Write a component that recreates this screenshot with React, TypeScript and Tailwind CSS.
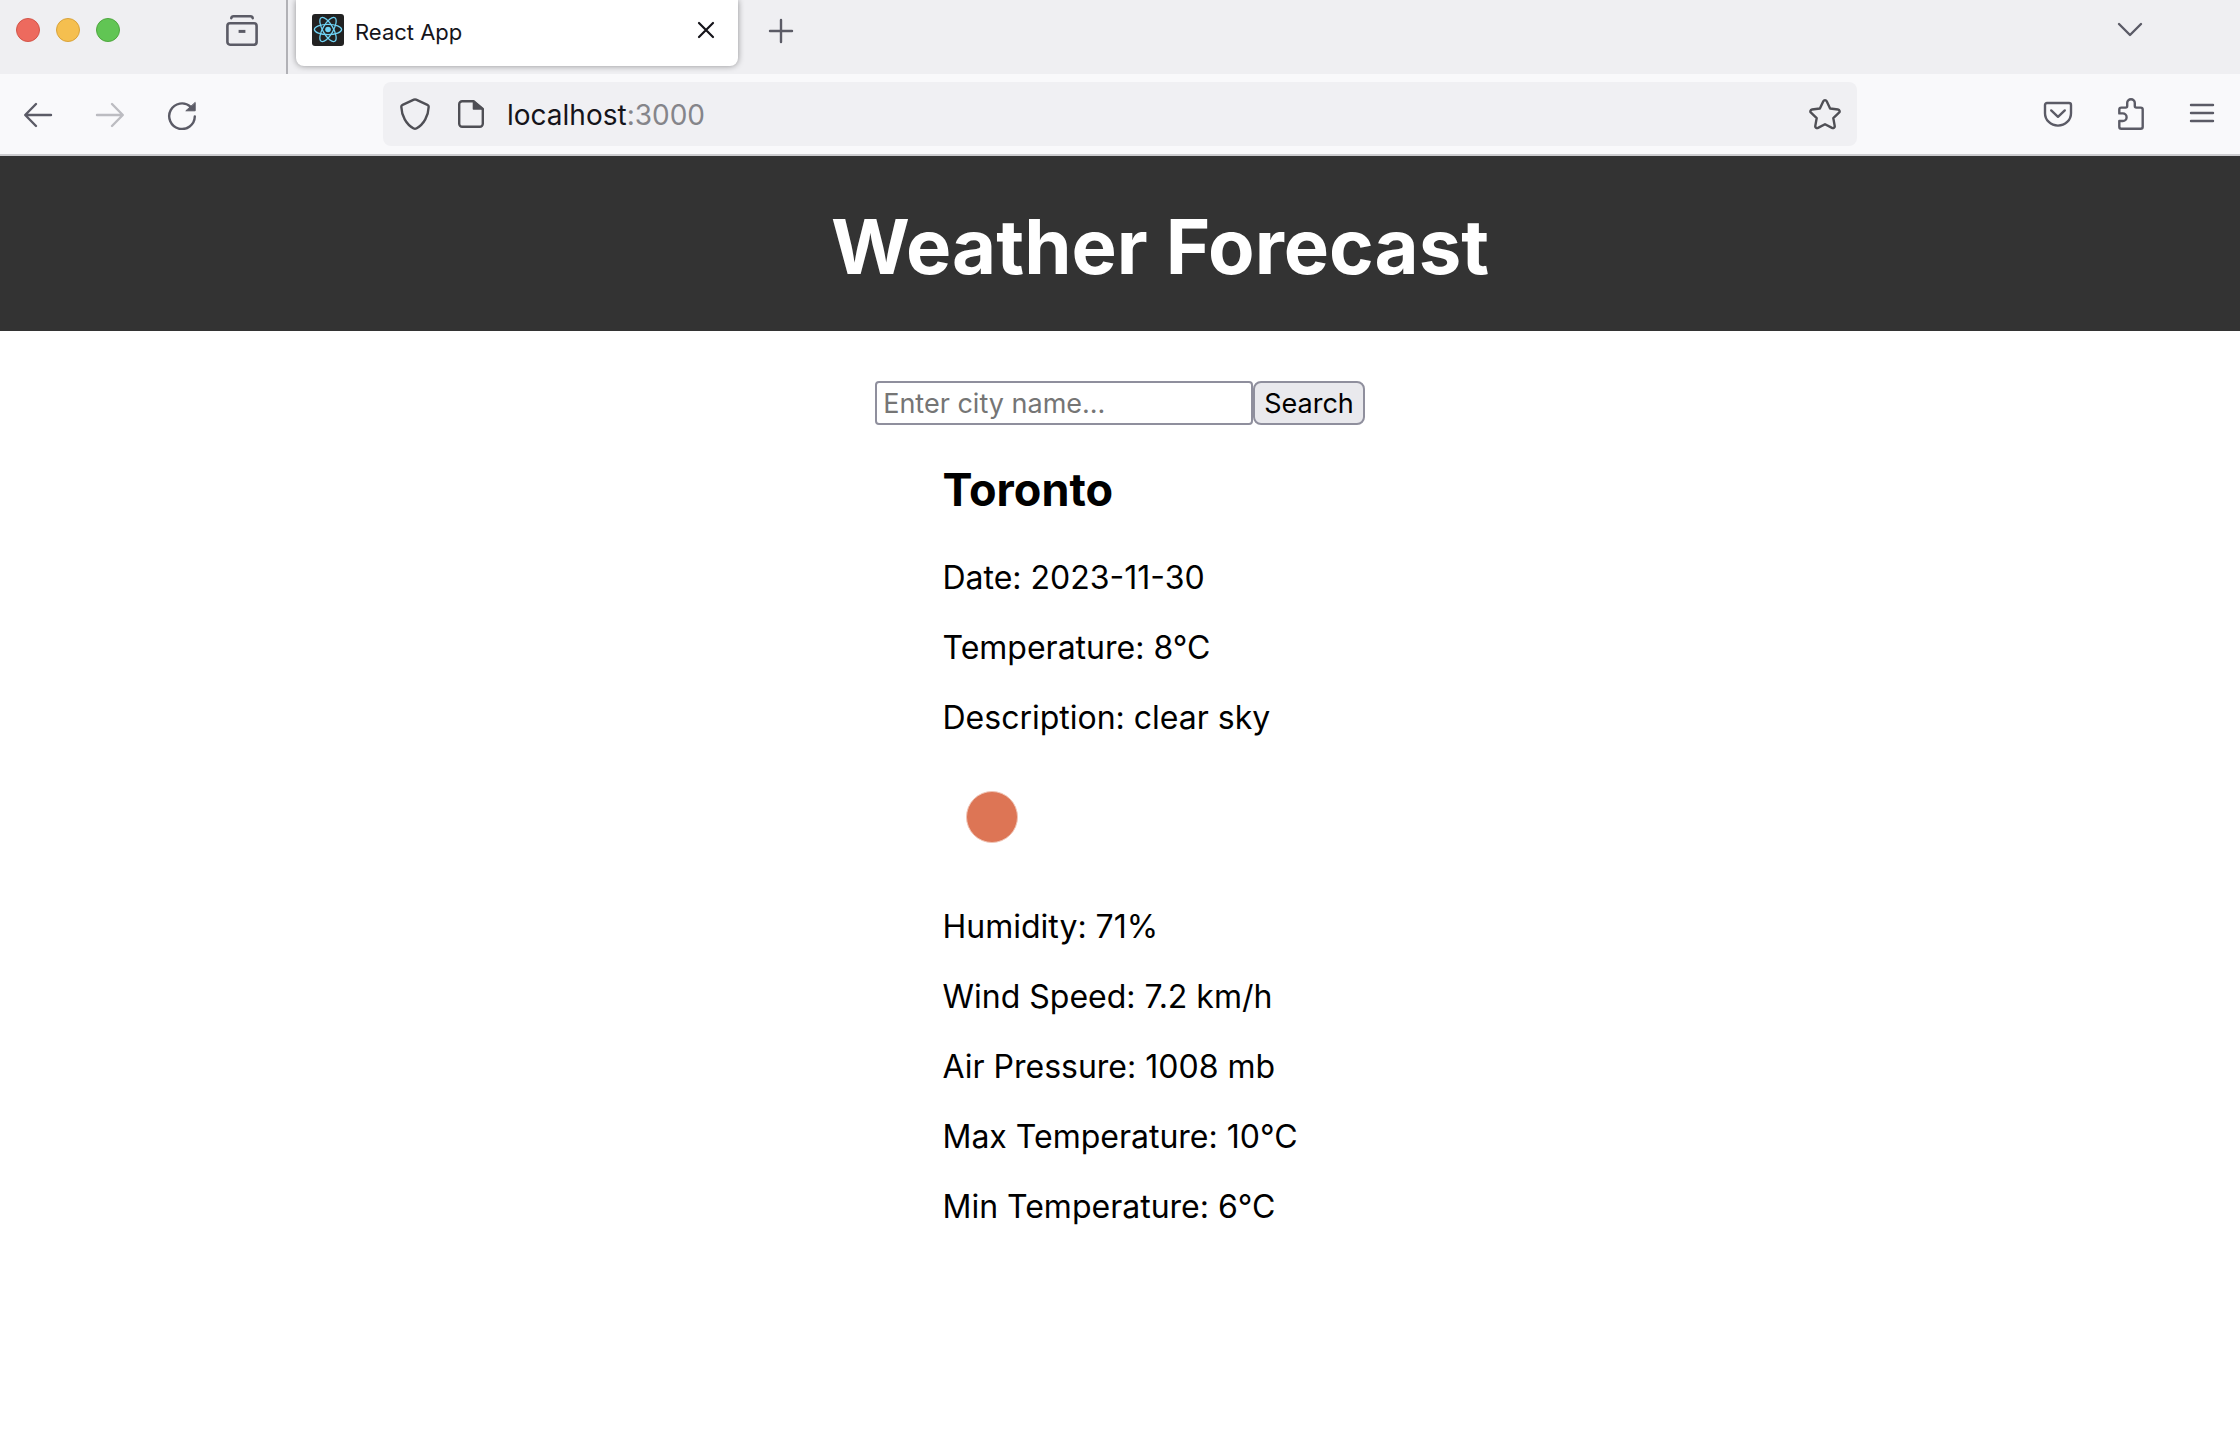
import type { ReactNode } from "react";

function Icon({ children, className = "" }: { children: ReactNode; className?: string }) {
  return (
    <svg
      viewBox="0 0 32 32"
      className={`size-8 shrink-0 ${className}`}
      fill="none"
      stroke="currentColor"
      strokeWidth="2.4"
      strokeLinecap="round"
      strokeLinejoin="round"
      aria-hidden="true"
    >
      {children}
    </svg>
  );
}

function ReactLogo() {
  return (
    <svg viewBox="0 0 32 32" className="size-8 shrink-0" aria-hidden="true">
      <rect width="32" height="32" rx="3" fill="#222222" />
      <g fill="none" stroke="#6fd3f5" strokeWidth="1.3">
        <ellipse cx="16" cy="15.5" rx="13.6" ry="5.2" />
        <ellipse cx="16" cy="15.5" rx="13.6" ry="5.2" transform="rotate(60 16 15.5)" />
        <ellipse cx="16" cy="15.5" rx="13.6" ry="5.2" transform="rotate(120 16 15.5)" />
      </g>
      <circle cx="16" cy="15.5" r="2.8" fill="#6fd3f5" />
    </svg>
  );
}

function TabBar() {
  return (
    <div className="flex h-[74px] items-start bg-[#efeff2] text-[#5b5b66]">
      <div className="flex gap-4 pt-[18px] pl-4">
        <button aria-label="Close window" className="size-6 rounded-full border border-[#d35549] bg-[#ed6a5e]" />
        <button aria-label="Minimize window" className="size-6 rounded-full border border-[#d9a33b] bg-[#f5bf4f]" />
        <button aria-label="Zoom window" className="size-6 rounded-full border border-[#4fa73f] bg-[#61c554]" />
      </div>
      <button aria-label="Recent browsing" className="mt-[14px] ml-[106px]">
        <Icon className="[stroke-width:2.6]">
          <path d="M5.3 4.2C5.5 2.7 6.4 2.3 7.6 2.3h16.8c1.2 0 2.1.4 2.3 1.9" />
          <rect x="1.4" y="9.3" width="29.2" height="21.4" rx="2.6" />
          <path d="M12.6 17.4h6.8" strokeLinecap="butt" strokeWidth="3" />
        </Icon>
      </button>
      <div className="ml-7 h-full w-2.5 border-l-2 border-[#b1b1b6]" />
      <div className="flex h-[66px] w-[442px] items-center rounded-b-lg bg-white pr-4 pb-[6px] pl-4 shadow-[0_0_6px_rgba(0,0,0,0.4)]">
        <ReactLogo />
        <span className="ml-[11px] flex-1 pt-1 text-[22px] leading-7 text-[#15141a]">React App</span>
        <button aria-label="Close tab" className="text-[#15141a]">
          <Icon className="[stroke-width:2.2]">
            <path d="M9 9l14 14M23 9L9 23" />
          </Icon>
        </button>
      </div>
      <button aria-label="New tab" className="mt-[15px] ml-[27px]">
        <Icon>
          <path d="M16 5v22M5 16h22" />
        </Icon>
      </button>
      <button aria-label="List all tabs" className="mt-[13px] mr-[94px] ml-auto">
        <Icon>
          <path d="M5 11l11 11 11-11" />
        </Icon>
      </button>
    </div>
  );
}

function Toolbar() {
  return (
    <div className="flex h-[82px] items-center border-b-2 border-[#cccccf] bg-[#f9f9fb] px-[22px] text-[#5b5b66]">
      <div className="flex gap-10">
        <button aria-label="Back">
          <Icon>
            <path d="M29 17H3.5M14 6L3.2 17 14 28" />
          </Icon>
        </button>
        <button aria-label="Forward" disabled className="text-[#bcbcc1]">
          <Icon>
            <path d="M3 17h25.5M18 6l10.8 11L18 28" />
          </Icon>
        </button>
        <button aria-label="Reload">
          <Icon>
            <path d="M24.5 8.6A12.8 12.8 0 1 0 28.8 18.5" />
            <path d="M29.2 4.8v8h-9z" fill="currentColor" strokeWidth="1" />
          </Icon>
        </button>
      </div>
      <div className="ml-[185px] flex h-16 flex-1 items-center rounded-lg bg-[#f0f0f3] px-4 text-[#4f4f55]">
        <Icon>
          <path d="M14.9 1.7L3.6 6.8C2.7 7.2 2.3 7.9 2.3 8.8 2.6 17.5 7 26.5 14.7 30.5c.9.4 1.7.4 2.6 0C25 26.5 29.4 17.5 29.7 8.8c0-.9-.4-1.6-1.3-2L17.1 1.7c-.8-.3-1.4-.3-2.2 0z" />
        </Icon>
        <Icon className="ml-6">
          <path d="M18.5 3.2H7.2a3 3 0 0 0-3 3v19.6a3 3 0 0 0 3 3h17.6a3 3 0 0 0 3-3V11z" />
          <path d="M18.5 3.2v7.8h9.3z" fill="currentColor" strokeWidth="1.6" />
        </Icon>
        <div className="relative ml-5 flex-1 pt-0.5 text-[28px] leading-9">
          <div aria-hidden="true" className="text-[#15141a]">
            localhost<span className="text-[#85858a]">:3000</span>
          </div>
          <input
            aria-label="Address"
            defaultValue="localhost:3000"
            className="absolute inset-0 w-full bg-transparent text-transparent caret-black outline-none"
          />
        </div>
        <button aria-label="Bookmark this page">
          <Icon>
            <path d="M14.3 3.2c.7-1.5 2.7-1.5 3.4 0l3.4 7.3 7.9 1c1.6.2 2.2 2.1 1 3.2l-5.7 5.4 1.4 7.8c.3 1.6-1.3 2.7-2.7 2L16 26.2 9 29.9c-1.4.7-3-.4-2.7-2l1.4-7.8L2 14.7c-1.2-1.1-.6-3 1-3.2l7.9-1z" />
          </Icon>
        </button>
      </div>
      <div className="ml-[185px] flex gap-10">
        <button aria-label="Save to Pocket">
          <Icon>
            <path d="M5 5h22a2 2 0 0 1 2 2v8.2a13 12.4 0 0 1-26 0V7a2 2 0 0 1 2-2z" />
            <path d="M9.2 12.4l6.8 6.4 6.8-6.4" />
          </Icon>
        </button>
        <button aria-label="Extensions">
          <Icon>
            <path d="M7.3 9.6h4.3a1.600 1.600 0 0 0 1.600-1.600V5a3.800 3.800 0 0 1 7.600 0v3a1.600 1.600 0 0 0 1.600 1.600h4.300a2 2 0 0 1 2 2v17.100a2 2 0 0 1-2 2H7.300a2 2 0 0 1-2-2V23H8.800a3.800 3.800 0 0 0 0-7.600H5.300v-3.800a2 2 0 0 1 2-2z" />
          </Icon>
        </button>
        <button aria-label="Open application menu">
          <Icon>
            <path d="M5 7h22M5 15h22M5 23h22" />
          </Icon>
        </button>
      </div>
    </div>
  );
}

const before = ["Date: 2023-11-30", "Temperature: 8°C", "Description: clear sky"];
const after = [
  "Humidity: 71%",
  "Wind Speed: 7.2 km/h",
  "Air Pressure: 1008 mb",
  "Max Temperature: 10°C",
  "Min Temperature: 6°C",
];

export default function App() {
  return (
    <div className="min-h-screen bg-white font-['Inter',sans-serif] text-black">
      <TabBar />
      <Toolbar />
      <header className="bg-[#333333] pt-[43px] pb-[37px] pl-20 text-center text-white">
        <h1 className="text-[76px] leading-[95px] font-bold">Weather Forecast</h1>
      </header>
      <main className="pt-[50px]">
        <form className="flex justify-center" onSubmit={(e) => e.preventDefault()}>
          <input
            aria-label="City name"
            type="text"
            placeholder="Enter city name..."
            className="h-11 w-[378px] rounded-sm border-2 border-[#8f8f9d] bg-white px-1.5 text-[27px] placeholder:text-[#757575]"
          />
          <button className="h-11 rounded-lg border-2 border-[#8f8f9d] bg-[#e9e9ed] px-[9px] pt-0.5 text-[27px] leading-9">
            Search
          </button>
        </form>
        <section className="mx-auto mt-9 w-fit">
          <h2 className="mb-10 text-[45px] leading-[58px] font-bold">Toronto</h2>
          <div className="flex flex-col gap-8 text-[32px] leading-[38px]">
            {before.map((line) => (
              <p key={line}>{line}</p>
            ))}
            <svg viewBox="0 0 100 107" className="h-[107px] w-[100px]" role="img" aria-label="clear sky">
              <circle cx="50" cy="48" r="25.5" fill="#dd7555" stroke="#f0c4b5" strokeWidth="1" />
            </svg>
            {after.map((line) => (
              <p key={line}>{line}</p>
            ))}
          </div>
        </section>
      </main>
    </div>
  );
}
